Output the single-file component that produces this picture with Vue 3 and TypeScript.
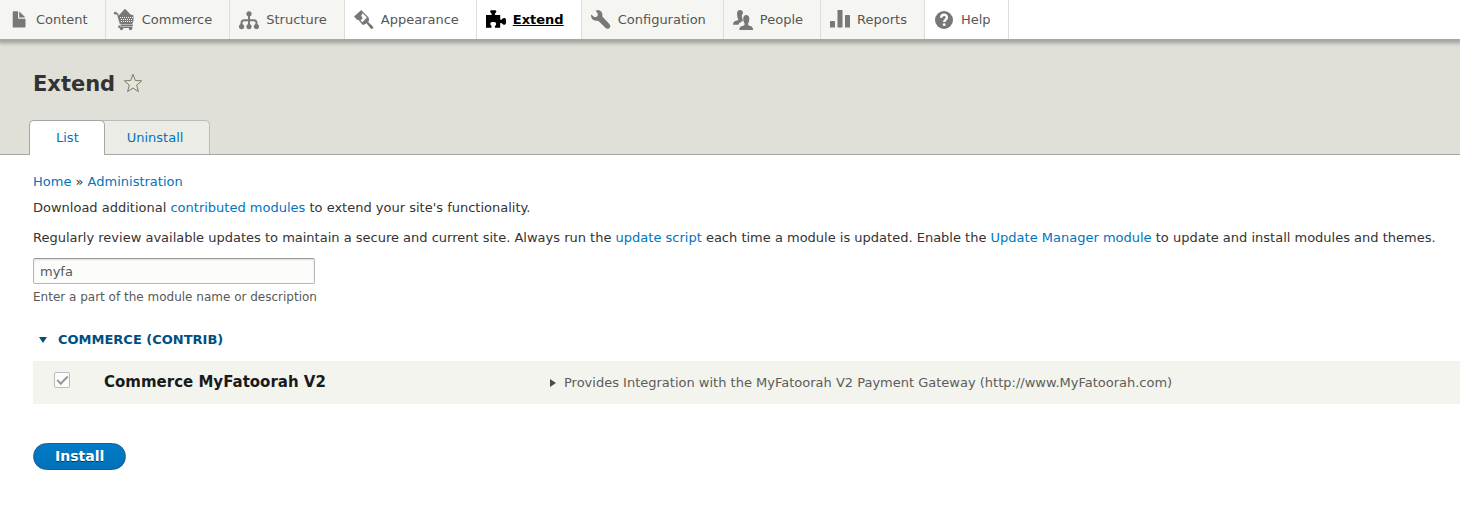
<script setup lang="ts">
import { ref } from 'vue'

interface NavItem {
  label: string
  icon: string
  tone?: 'light' | 'active'
}

const navItems: NavItem[] = [
  { label: 'Content', icon: 'file' },
  { label: 'Commerce', icon: 'cart' },
  { label: 'Structure', icon: 'tree' },
  { label: 'Appearance', icon: 'brush', tone: 'light' },
  { label: 'Extend', icon: 'puzzle', tone: 'active' },
  { label: 'Configuration', icon: 'wrench' },
  { label: 'People', icon: 'people' },
  { label: 'Reports', icon: 'bars' },
  { label: 'Help', icon: 'help', tone: 'light' },
]

const filterText = ref('myfa')
const checked = ref(true)
</script>

<template>
  <div class="page">
    <nav class="toolbar" aria-label="Administration menu">
      <a v-for="item in navItems" :key="item.label" href="#" class="item" :class="item.tone">
        <svg class="icon" viewBox="0 0 20 20" aria-hidden="true">
          <g v-if="item.icon === 'file'">
            <path d="M4.3 1.2h4.2c.4 0 .6.2.6.6v6.3c0 .4.3.7.7.7h6c.4 0 .7.3.7.7v7.4c0 .4-.3.7-.7.7H4.4c-.4 0-.7-.3-.7-.7V1.8c0-.4.2-.6.6-.6z" />
            <path d="M10.2 1.9c0-.4.2-.5.5-.2l5.2 5.2c.3.3.2.6-.2.6h-4.9c-.4 0-.6-.2-.6-.6z" />
          </g>
          <g v-else-if="item.icon === 'cart'">
            <path d="M4 5.2 7.600 1.200l2.400-2.400L12.200 1l3.300 3.400 3 .8v5.500L17.200 14H5.600L3.600 7.200z" />
            <path class="line thin" d="M0 2.800 2.600 4 5.400 13.600M5.500 15.300h12.400M4.500 15.300q-1.500 2 0 2h13" />
            <circle cx=".3" cy="3.200" r="1.400" />
            <circle cx="6.500" cy="18.500" r="1.700" /><circle cx="15.500" cy="18.500" r="1.700" />
            <path class="holes" d="M5 7.500h13M6 9.500h11M6 11.500h11" />
          </g>
          <g v-else-if="item.icon === 'tree'">
            <path class="line mid" d="M10 4v13M2.500 17v-4q0-2.800 2.800-2.800h9.400q2.800 0 2.800 2.800v4" />
            <circle cx="10" cy="3.800" r="2.600" />
            <circle cx="2.600" cy="16.600" r="2.600" /><circle cx="10" cy="16.600" r="2.600" /><circle cx="17.400" cy="16.600" r="2.600" />
          </g>
          <g v-else-if="item.icon === 'brush'">
            <path fill-rule="evenodd" d="M7.300 0 0 6.600l3 3.200 1.500.3 4.300 5 2.200-.8 1.500-1 3.900 5q1.200 1.300 2.400.3t-.1-2.300l-4.500-4.300 1-2-.7-2.700L9.600 2.600zM8.700 3.200 12.900 7.500 8.300 12.200 6.600 10.400 8.700 8.300 7.200 5.800z" />
          </g>
          <g v-else-if="item.icon === 'puzzle'">
            <path d="M0 5h5.400c.5-.8.3-1.600-.6-2.300C3.600 1.600 4.300.2 5.300.2h3.900c1.200 0 1.600 1.600.5 2.500-.9.7-1 1.500-.4 2.300h4.900v4.400c.9.5 1.600.3 2.200-.6.9-1.300 3.500-1.100 3.600.9v3.200c-.1 2-2.700 2.300-3.700.9-.6-.8-1.300-.9-2.100-.5v4.400H9.100c-.5-.9-.3-1.500.4-2.100 1.200-1.100.8-3.100-1-3.500H6c-1.900.4-2.300 2.400-1 3.500.7.6.8 1.300.3 2.100H0z" />
          </g>
          <g v-else-if="item.icon === 'wrench'">
            <path d="M4.700.7c3.400-1.600 7.200.8 6.700 4.500-.1 1 .2 1.500.9 2.200l5.900 6.300c3 3.200-.8 6.800-3.800 4L8 11.500c-.7-.6-1.200-.8-2.100-.7C2.500 11.300-.5 8.200.1 4.600l3.500 2.600 2.800-.8.500-2.700z" />
          </g>
          <g v-else-if="item.icon === 'people'">
            <path d="M4 3.600C4 1.300 5.200 0 7 0s3 1 3 3.200c-1 1.100-1.300 2.600-1 4.300.2 1.200.9 1.900.9 2.800 0 1.400-3.500 1.500-4.400 4.500H0c0-2.500 1-3.600 3-4 1.500-.3 2.300-.8 2.300-1.500C4.400 8 4.200 6.200 4 3.600z" />
            <path d="M10.200 8.500c0-2.300 1.200-3.600 3-3.600s3.100 1.200 3.100 3.500c0 2.600-.5 4.200-1.300 5.300 0 1.500.8 1.900 2.300 2.200 2 .5 2.800 1.800 2.800 4.100H6.300c0-2.500.9-3.700 2.900-4.100 1.600-.3 2.500-.7 2.500-2.200-.9-1-1.500-2.800-1.500-5.200z" />
          </g>
          <g v-else-if="item.icon === 'bars'">
            <rect x="0" y="11" width="5" height="6.500" rx=".6" />
            <rect x="7.500" y="0" width="5" height="17.500" rx=".6" />
            <rect x="15" y="5" width="5" height="12.500" rx=".6" />
          </g>
          <g v-else>
            <circle cx="10" cy="10" r="9" />
            <path class="mark" d="M7.200 7.800C7.300 5.700 8.400 4.800 10 4.800s2.900 1 2.900 2.600c0 2-2.700 2.300-2.700 4.700" />
            <circle class="dot" cx="10.200" cy="14.700" r="1.400" />
          </g>
        </svg>
        <span>{{ item.label }}</span>
      </a>
    </nav>

    <header class="header">
      <div class="title-row">
        <h1>Extend</h1>
        <button type="button" class="star" aria-label="Add to shortcuts">
          <svg viewBox="0 0 20 20" aria-hidden="true">
            <path d="M10 1.300 12.300 7.500 18.700 7.800 13.700 12.100 15.400 18.600 10 15 4.600 18.600 6.300 12.100 1.300 7.800 7.700 7.500z" />
          </svg>
        </button>
      </div>
      <nav class="tabs" aria-label="Primary tabs">
        <a href="#" class="tab current" aria-current="page">List</a>
        <a href="#" class="tab">Uninstall</a>
      </nav>
    </header>

    <main class="content">
      <nav class="breadcrumb" aria-label="Breadcrumb"><a href="#">Home</a> » <a href="#">Administration</a></nav>
      <p>Download additional <a href="#">contributed modules</a> to extend your site's functionality.</p>
      <p>Regularly review available updates to maintain a secure and current site. Always run the <a href="#">update script</a> each time a module is updated. Enable the <a href="#">Update Manager module</a> to update and install modules and themes.</p>

      <form @submit.prevent>
        <input id="module-filter" v-model="filterText" class="filter" type="text" aria-label="Filter modules" aria-describedby="filter-help">
        <div id="filter-help" class="help">Enter a part of the module name or description</div>

        <details class="package" open>
          <summary>
            <svg class="down" viewBox="0 0 8 6" aria-hidden="true"><path d="M0 0h8L4 6z" /></svg>
            Commerce (Contrib)
          </summary>
          <table>
            <tbody>
              <tr>
                <td class="check-cell"><input id="module-myfatoorah" v-model="checked" type="checkbox" disabled></td>
                <td class="name-cell"><label for="module-myfatoorah">Commerce MyFatoorah V2</label></td>
                <td class="text-cell">
                  <details>
                    <summary>
                      <svg class="right" viewBox="0 0 6 8" aria-hidden="true"><path d="M0 0v8l6-4z" /></svg>
                      Provides Integration with the MyFatoorah V2 Payment Gateway (http://www.MyFatoorah.com)
                    </summary>
                  </details>
                </td>
              </tr>
            </tbody>
          </table>
        </details>

        <button type="submit" class="install">Install</button>
      </form>
    </main>
  </div>
</template>

<style>
body {
  margin: 0;
  background: #fff;
}
</style>

<style scoped>
.page {
  font: 13px/20px "DejaVu Sans", sans-serif;
  color: #333;
  overflow-x: hidden;
}
a {
  color: #0074bd;
  text-decoration: none;
}
.toolbar {
  position: relative;
  display: flex;
  height: 39px;
  background: #fff;
  box-shadow: 0 2px 0 #a6a8a2, 0 2px 4px 2px rgba(0, 0, 0, 0.3);
}
.item {
  display: flex;
  align-items: center;
  gap: 7px;
  padding: 0 17px 0 9px;
  border-right: 1px solid #ddd;
  background: #f5f5f2;
  color: #565656;
  white-space: nowrap;
}
.item.light,
.item.active {
  background: #fff;
}
.item.active {
  color: #000;
  font-weight: bold;
  text-decoration: underline;
}
.icon {
  width: 20px;
  height: 20px;
  flex: none;
  overflow: visible;
  fill: #787878;
}
.active .icon {
  fill: #000;
}
.line {
  fill: none;
  stroke: #787878;
}
.thin {
  stroke-width: 1.4;
}
.mid {
  stroke-width: 2;
}
.holes {
  fill: none;
  stroke: #f5f5f2;
  stroke-width: 1;
  stroke-dasharray: 1 1;
}
.mark {
  fill: none;
  stroke: #fff;
  stroke-width: 2.4;
}
.dot {
  fill: #fff;
}
.header {
  padding: 31px 29px 0;
  background: #e0e0d8;
  border-bottom: 1px solid #a6a6a6;
}
.title-row {
  display: flex;
  align-items: flex-start;
  gap: 8px;
  height: 29px;
  padding-left: 4px;
  margin-bottom: 21px;
}
h1 {
  margin: 0;
  font-size: 21px;
  line-height: 29px;
}
.star {
  display: flex;
  padding: 3px 0;
  border: 0;
  background: none;
}
.star svg {
  width: 20px;
  height: 20px;
  fill: #e4e4dc;
  stroke: #7c7c60;
  stroke-width: 1;
  stroke-linejoin: round;
}
.tabs {
  display: flex;
  margin-bottom: -1px;
}
.tab {
  padding: 7px 26px 6px;
  margin: 0 0 1px -5px;
  border: 1px solid #bbb;
  border-bottom: 0;
  border-radius: 0 5px 0 0;
  background: #ecece7;
}
.tab.current {
  position: relative;
  margin: 0;
  padding: 7px 25px 7px 26px;
  border-color: #a6a6a6;
  border-radius: 5px 5px 0 0;
  background: #fff;
}
.content {
  padding: 17px 0 53px 33px;
}
.breadcrumb {
  margin-bottom: 6px;
}
p {
  margin: 0 0 10px;
}
.filter {
  box-sizing: border-box;
  display: block;
  width: 282px;
  height: 26px;
  padding: 0 6px;
  border: 1px solid #b8b8b8;
  border-top-color: #999;
  border-radius: 2px;
  background: #fcfcfa;
  box-shadow: inset 0 1px 2px rgba(0, 0, 0, 0.13);
  color: #595959;
  font: 13px "DejaVu Sans", sans-serif;
}
.help {
  margin-top: 3px;
  color: #595959;
  font-size: 12px;
}
summary {
  display: flex;
  align-items: center;
  list-style: none;
  cursor: pointer;
}
.package {
  margin-top: 23px;
}
.package > summary {
  gap: 11px;
  padding: 0 0 11px 6px;
  color: #004f80;
  font-weight: bold;
  text-transform: uppercase;
}
.down {
  width: 8px;
  height: 6px;
  fill: #004f80;
}
table {
  width: 100%;
  border-collapse: collapse;
  background: #f3f4ee;
}
td {
  height: 43px;
  padding: 0;
}
.check-cell {
  width: 71px;
}
.check-cell input {
  appearance: none;
  box-sizing: border-box;
  display: flex;
  width: 16px;
  height: 16px;
  margin: 0 0 6px 21px;
  border: 1px solid #bbb;
  border-radius: 2px;
  background: #fcfcfa;
}
.check-cell input:checked::after {
  content: "";
  box-sizing: border-box;
  width: 11px;
  height: 6px;
  margin: 3px 0 0 2px;
  border: solid #999;
  border-width: 0 0 2px 2px;
  transform: rotate(-45deg);
}
.name-cell {
  box-sizing: border-box;
  width: 446px;
  padding-bottom: 2px;
  color: #1a1a1a;
  font-size: 15px;
  font-weight: bold;
}
.text-cell summary {
  gap: 8px;
  color: #5c5c5b;
}
.right {
  width: 6px;
  height: 8px;
  fill: #4c4c4c;
}
.install {
  display: block;
  height: 27px;
  margin-top: 39px;
  padding: 0 21px 2px;
  border: 1px solid #1e5c90;
  border-radius: 14px;
  background: linear-gradient(#007bc6, #0071b8);
  color: #fff;
  font: bold 14px "DejaVu Sans", sans-serif;
  text-shadow: 0 1px rgba(0, 0, 0, 0.5);
}
</style>
